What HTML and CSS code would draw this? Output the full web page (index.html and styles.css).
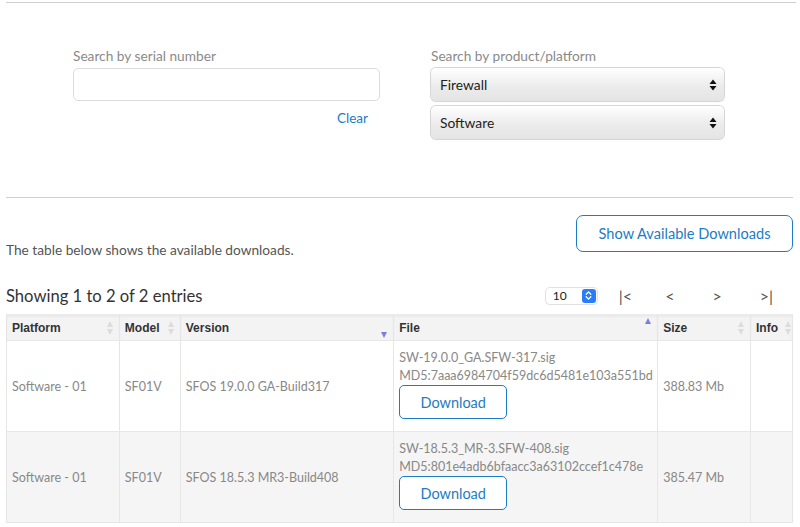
FILE: index.html
```html
<!DOCTYPE html>
<html>
<head>
<meta charset="utf-8">
<link rel="stylesheet" href="styles.css">
</head>
<body>
<div class="page">
  <hr class="rule top-rule">
  <div class="search-row">
    <div class="field serial">
      <label class="label">Search by serial number</label>
      <input class="text-input" type="text">
      <div class="clear-row"><a class="clear">Clear</a></div>
    </div>
    <div class="field product">
      <label class="label">Search by product/platform</label>
      <div class="select"><span>Firewall</span><svg class="updown" width="8" height="12" viewBox="0 0 8 12"><path d="M4 0.5L7.5 5H0.5Z M4 11.5L0.5 7H7.5Z" fill="#111"/></svg></div>
      <div class="select"><span>Software</span><svg class="updown" width="8" height="12" viewBox="0 0 8 12"><path d="M4 0.5L7.5 5H0.5Z M4 11.5L0.5 7H7.5Z" fill="#111"/></svg></div>
    </div>
  </div>
  <hr class="rule mid-rule">
  <div class="info-row">
    <p class="info-text">The table below shows the available downloads.</p>
    <button class="show-btn">Show Available Downloads</button>
  </div>
  <div class="table-top">
    <div class="showing">Showing 1 to 2 of 2 entries</div>
    <div class="controls">
      <div class="len-select"><span>10</span><span class="len-arrow"><svg width="9" height="11" viewBox="0 0 9 11"><path d="M2.2 4.2L4.5 1.9L6.8 4.2 M2.2 6.8L4.5 9.1L6.8 6.8" stroke="#fff" stroke-width="1.3" fill="none" stroke-linecap="round" stroke-linejoin="round"/></svg></span></div>
      <span class="pg first">|&lt;</span>
      <span class="pg prev">&lt;</span>
      <span class="pg next">&gt;</span>
      <span class="pg last">&gt;|</span>
    </div>
  </div>
  <table class="downloads">
    <thead>
      <tr>
        <th class="c-platform"><span class="th-in">Platform<span class="sort both"></span></span></th>
        <th class="c-model"><span class="th-in">Model<span class="sort both"></span></span></th>
        <th class="c-version"><span class="th-in">Version<span class="sort desc"></span></span></th>
        <th class="c-file"><span class="th-in">File<span class="sort asc"></span></span></th>
        <th class="c-size"><span class="th-in">Size<span class="sort both"></span></span></th>
        <th class="c-info"><span class="th-in">Info<span class="sort both tight"></span></span></th>
      </tr>
    </thead>
    <tbody>
      <tr>
        <td>Software - 01</td>
        <td>SF01V</td>
        <td>SFOS 19.0.0 GA-Build317</td>
        <td class="file-cell">
          <div class="fname">SW-19.0.0_GA.SFW-317.sig</div>
          <div class="fname">MD5:7aaa6984704f59dc6d5481e103a551bd</div>
          <button class="dl-btn">Download</button>
        </td>
        <td>388.83 Mb</td>
        <td></td>
      </tr>
      <tr class="alt">
        <td>Software - 01</td>
        <td>SF01V</td>
        <td>SFOS 18.5.3 MR3-Build408</td>
        <td class="file-cell">
          <div class="fname">SW-18.5.3_MR-3.SFW-408.sig</div>
          <div class="fname">MD5:801e4adb6bfaacc3a63102ccef1c478e</div>
          <button class="dl-btn">Download</button>
        </td>
        <td>385.47 Mb</td>
        <td></td>
      </tr>
    </tbody>
  </table>
</div>
</body>
</html>
```
FILE: styles.css
```css
* { box-sizing: border-box; }
html, body { margin: 0; padding: 0; background: #fff; }
body {
  font-family: "Lato", "Liberation Sans", sans-serif;
  font-size: 13px;
  color: #555;
}
.page { padding: 2px 7px 0 6px; }
.rule { border: 0; border-top: 1px solid #cfcfcf; margin: 0; }
.top-rule { margin-right: -3px; }

.search-row {
  display: flex;
  padding: 44px 0 0 67px;
  gap: 51px;
  height: 194px;
}
.field { display: flex; flex-direction: column; }
.serial { width: 307px; }
.product { width: 293px; }
.label { color: #8a8a8a; font-size: 13.7px; line-height: 18px; height: 21px; }
.text-input {
  height: 33px;
  border: 1px solid #dcdcdc;
  border-radius: 5px;
  background: #fff;
  outline: none;
}
.clear-row { display: flex; justify-content: flex-end; padding: 8px 12px 0 0; }
.clear { color: #1c7cc4; font-size: 13.5px; line-height: 18px; }
.select {
  height: 33px;
  margin-bottom: 5px;
  border-radius: 5px;
  background: linear-gradient(#ffffff, #ececec 55%, #e4e4e4);
  box-shadow: 0 0 0 1px #d6d6d6, 0 1px 1px rgba(0,0,0,0.08);
  display: flex;
  align-items: center;
  justify-content: space-between;
  padding: 0 7px 0 9px;
  color: #222;
  font-size: 13.8px;
}

.info-row {
  display: flex;
  justify-content: space-between;
  align-items: flex-start;
  padding-top: 17px;
  height: 82px;
}
.info-text { margin: 26px 0 0 0; font-size: 13.7px; line-height: 18px; color: #555; }
.show-btn {
  width: 217px;
  height: 37px;
  border: 1px solid #1c7cc4;
  border-radius: 7px;
  background: #fff;
  color: #1c7cc4;
  font-family: inherit;
  font-size: 14.6px;
  padding: 0;
}

.table-top {
  display: flex;
  justify-content: space-between;
  align-items: center;
  height: 34px;
  padding-bottom: 3px;
}
.showing { font-size: 16.6px; color: #333; }
.controls { display: flex; align-items: center; }
.len-select {
  width: 51px;
  height: 16px;
  border-radius: 4px;
  box-shadow: 0 0 0 1px #e2e2e2, 0 1px 1px rgba(0,0,0,0.1);
  display: flex;
  align-items: center;
  justify-content: space-between;
  padding: 0 1px 0 7px;
  font-size: 12px;
  color: #222;
  margin-right: 22px;
}
.len-arrow {
  width: 14px; height: 14px;
  background: #2b7cf7;
  border-radius: 3px;
  display: flex; align-items: center; justify-content: center;
}
.pg { font-size: 16px; color: #555; }
.pg.prev { margin-left: 33px; }
.pg.next { margin-left: 38px; }
.pg.last { margin-left: 38px; margin-right: 20px; }

.downloads {
  width: 100%;
  border-collapse: collapse;
  margin-top: 0;
  border-bottom: 1px solid #e4e4e4;
}
.downloads th {
  background: #f3f3f3;
  box-shadow: inset 0 2px 2px rgba(0,0,0,0.04);
  height: 26px;
  text-align: left;
  font-family: "Liberation Sans", Arial, sans-serif;
  font-weight: bold;
  font-size: 12px;
  color: #333;
  padding: 0 0 0 5px;
  border-left: 1px solid #e6e6e6;
  border-right: 1px solid #e6e6e6;
  border-top: 1px solid #ececec;
}
.th-in { display: flex; justify-content: space-between; align-items: center; padding-right: 5px; }
.c-platform { width: 113px; }
.c-model { width: 61px; }
.c-version { width: 214px; }
.c-file { width: 264px; }
.c-size { width: 93px; }
.c-info { width: 42px; }
.c-info .th-in { padding-right: 0; }
.sort { width: 7px; height: 16px; display: inline-block; position: relative; }
.sort::before, .sort::after {
  content: ""; position: absolute; left: 0;
  border-left: 3.5px solid transparent; border-right: 3.5px solid transparent;
}
.sort.both::before { top: 1px; border-bottom: 6px solid #dcdcdc; }
.sort.both::after { bottom: 1px; border-top: 6px solid #dcdcdc; }
.sort.desc::after { bottom: -2px; border-top: 6px solid #7b80e0; }
.sort.asc::before { top: -2px; border-bottom: 6px solid #7b80e0; }

.downloads td {
  height: 91px;
  vertical-align: middle;
  padding: 0 0 0 5px;
  color: #888;
  font-size: 12.5px;
  border-left: 1px solid #e6e6e6;
  border-right: 1px solid #e6e6e6;
  border-top: 1px solid #e8e8e8;
}
.downloads tr.alt td { background: #f5f5f5; }
.downloads td.file-cell { padding-top: 0; padding-bottom: 4px; }
.fname { line-height: 18px; white-space: nowrap; }
.dl-btn {
  margin-top: 0;
  width: 108px;
  height: 34px;
  border: 1px solid #1c7cc4;
  border-radius: 5px;
  background: #fff;
  color: #1c7cc4;
  font-family: inherit;
  font-size: 14.5px;
  padding: 0;
  display: block;
}
```
